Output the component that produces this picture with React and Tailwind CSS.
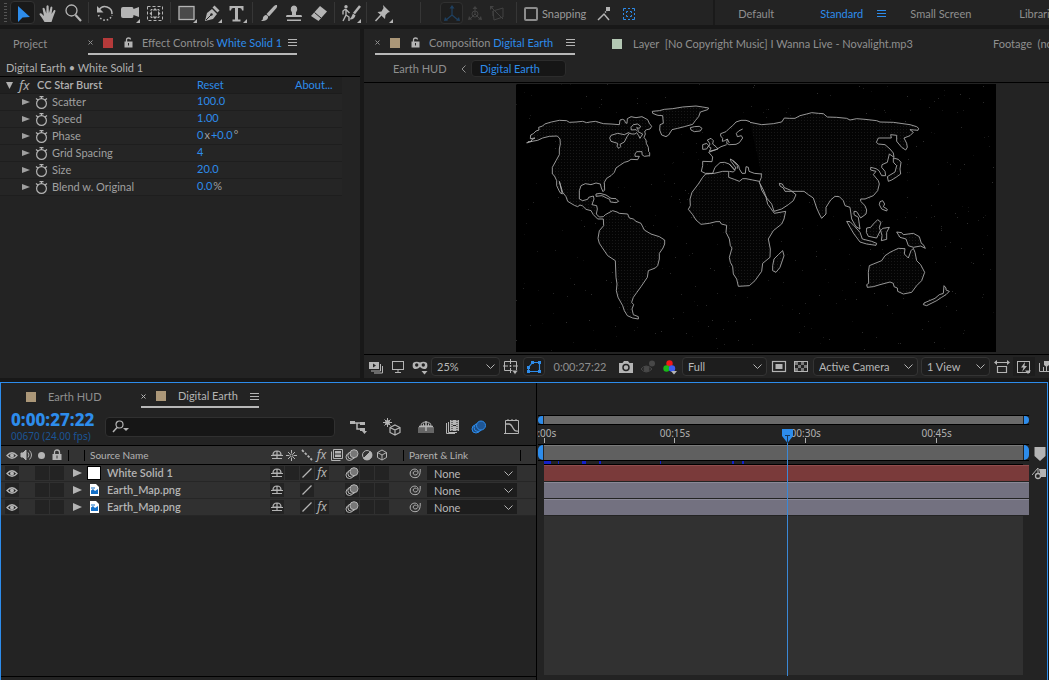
import { useState } from 'react'

const EFFECT_PROPS = [
  { label: 'Scatter', value: '100.0' },
  { label: 'Speed', value: '1.00' },
  { label: 'Phase', value: '0', mid: 'x', value2: '+0.0', unit: '°' },
  { label: 'Grid Spacing', value: '4' },
  { label: 'Size', value: '20.0' },
  { label: 'Blend w. Original', value: '0.0', unit: '%' }
]

const LAYERS = [
  { id: 1, name: 'White Solid 1', kind: 'solid', star: true, fx: true, bar: 'bg-[#7a3a3a] border-[#8f4d4d]' },
  { id: 2, name: 'Earth_Map.png', kind: 'image', star: false, fx: false, bar: 'bg-[#737180] border-[#8a8896]' },
  { id: 3, name: 'Earth_Map.png', kind: 'image', star: false, fx: true, bar: 'bg-[#737180] border-[#8a8896]' }
]

const DURATION = 54.9
const PLAYHEAD = 27.92
const RULER = [
  { at: 0, label: '0:00s' },
  { at: 15, label: '00:15s' },
  { at: 30, label: '00:30s' },
  { at: 45, label: '00:45s' }
]
// Cached preview frames, in seconds
const CACHED = [[0, 0.8], [1.6, 0.15], [4.4, 0.45], [6.3, 0.25], [13.3, 0.15], [21.5, 0.25], [22.7, 0.25]]

const pct = (seconds) => `${(seconds / DURATION) * 100}%`

// Small repeatable noise for the faint specks behind the map
const SPECKS = Array.from({ length: 420 }, (_, i) => {
  const a = Math.sin(i * 12.9898) * 43758.5453
  const b = Math.sin(i * 78.233) * 12543.123
  return { x: Math.floor((a - Math.floor(a)) * 480) * 3, y: Math.floor((b - Math.floor(b)) * 268) * 3, o: 0.06 + (i % 7) * 0.02 }
})

function Svg({ w = 20, h = 20, className = '', children }) {
  return (
    <svg width={w} height={h} viewBox={`0 0 ${w} ${h}`} className={`shrink-0 ${className}`} fill="none" stroke="currentColor" aria-hidden="true">
      {children}
    </svg>
  )
}

const Corner = () => <path d="M20 16v4h-4z" fill="currentColor" stroke="none" />

const TOOLS = {
  select: <path d="M5 3v16l4.500-4.500L17 14z" fill="currentColor" stroke="none" />,
  hand: (
    <path d="M6.500 19 L4 15 L1.500 11.500 Q1.500 9.500 3.500 10.500 L6 13 L4.500 5.500 Q5.500 4 6.500 5.300 L8.300 10.500 L8.500 3 Q9.600 1.500 10.600 3 L10.900 10.300 L12.600 4 Q13.800 3 14.400 4.500 L13.600 11 L16 7 Q17.500 6.500 17.500 8 L15 14.500 L13.500 19z" fill="currentColor" stroke="none" />
  ),
  zoom: <><circle cx="8.500" cy="7.500" r="5.500" strokeWidth="1.300" /><path d="M12.500 12l5.500 6" strokeWidth="2.200" /></>,
  rotate: <><path d="M4 7A7 7 0 0 1 17 11" strokeWidth="1.600" /><path d="M3.500 12A7 7 0 0 0 17 12" strokeWidth="1.600" strokeDasharray="1.500 2" /><path d="M2 3v6.500h6.500z" fill="currentColor" stroke="none" /></>,
  camera: <><path d="M1 6q0-2 2-2h9q1.500 0 1.500 2l5.500-2v10l-5.500-2q0 3-1.500 3H3q-2 0-2-2z" fill="currentColor" stroke="none" /></>,
  region: <><rect x="2.500" y="3.500" width="15" height="14" strokeDasharray="3 2" /><path d="M10 5l2.500 2.500h-5zM10 16l2.500-2.500h-5zM4.500 10.500L7 8v5zM15.500 10.500L13 8v5z" fill="currentColor" stroke="none" /><path d="M6 8V6.500h1.500M14 8V6.500h-1.500M6 13v1.500h1.500M14 13v1.500h-1.500" /></>,
  rect: <><rect x="2" y="3.500" width="15" height="13" fill="#4a4a4a" strokeWidth="1.300" /></>,
  pen: <><path d="M3 18l2-8 5-4 5 5-4 5z" fill="currentColor" stroke="none" /><path d="M10.500 4.500l2-2 5 5-2 2z" fill="currentColor" stroke="none" /><path d="M4 17l5-5" stroke="#232323" /><circle cx="9.500" cy="11.500" r="1.200" fill="#232323" stroke="none" /></>,
  type: <path d="M2.500 3h14v4.500h-1.500q0-2.500-2-2.500h-2v11.500h2.500v2h-8v-2H8V5H6Q4 5 4 7.500H2.500z" fill="currentColor" stroke="none" />,
  brush: <><path d="M18 2q-1.500-.5-3 1L7.500 11l2.500 2.500L17.500 5q1-1.500.5-3z" fill="currentColor" stroke="none" /><path d="M6.500 12q3 0 2.500 3-1.500 3.500-7 3 2.500-1.500 2-3.500.5-2 2.500-2.500z" fill="currentColor" stroke="none" /></>,
  stamp: <path d="M8 9.500Q6 7 7 4.500q1-2 3-2t3 2q1 2.500-1 5V12h5q1 0 1 2H2q0-2 1-2h5zM3 16.500h14v1.500H3z" fill="currentColor" stroke="none" />,
  eraser: <><path d="M2 13L11 3l7 5.500L9.500 18z" fill="currentColor" stroke="none" /><path d="M5.500 9.500l6.500 5.500" stroke="#232323" /></>,
  roto: <><circle cx="5" cy="3.800" r="1.700" fill="currentColor" stroke="none" /><path d="M4.500 6L2 8v3.500M5 6v6l-3 6M5 12l3 2v4M5 6.500L8.500 10" strokeWidth="1.400" /><path d="M19 3l-6 7.500" strokeWidth="2.500" /><path d="M12 10.500l2.500 2Q13 17 8.500 16.500q2-2 3.500-6z" fill="currentColor" stroke="none" /></>,
  pin: <><path d="M10 2l7 7-2 .5-2.500 2.500-.5 4-7.500-7 4-.5L10.500 5z" fill="currentColor" stroke="none" /><path d="M8 12l-5.500 6" strokeWidth="1.500" /></>,
  axisLocal: <><path d="M10 3v9L4 17M10 12l6 5" strokeWidth="1.200" /><path d="M10 2l2.500 3.500h-5zM2 18l1-4 3 3.500zM18 18l-1-4-3 3.500z" fill="currentColor" stroke="none" /></>,
  axisWorld: <><path d="M10 4v7L5 16M10 11l5 5" /><circle cx="10" cy="11" r="3" /><path d="M10 3l2.500 3h-5zM3 17l1-4 3 3.500zM17 17l-1-4-3 3.500z" fill="currentColor" stroke="none" /></>,
  axisView: <><path d="M5 8l10-3v9L6 17zM5 8v5M3 4l12 12" /><path d="M2 3h4l-4 4z" fill="currentColor" stroke="none" /></>
}

function ToolButton({ name, label, corner, active }) {
  return (
    <button
      aria-label={label}
      className={`flex h-[23px] w-[25px] shrink-0 items-center justify-center rounded-sm border ${active ? 'border-[#323232] bg-[#191919] text-[#2d8ceb]' : 'border-transparent'}`}
    >
      <Svg>
        {TOOLS[name]}
        {corner && <Corner />}
      </Svg>
    </button>
  )
}

const Sep = () => <div className="mx-[3px] h-[21px] w-px shrink-0 bg-[#363636]" />

function Toolbar() {
  const [snapping, setSnapping] = useState(false)

  return (
    <header className="flex h-[25px] items-center overflow-hidden bg-[#232323] text-[#b4b4b4]">
      <div className="ml-1 mr-[3px] flex h-5 w-[3px] shrink-0 flex-col justify-between">
        {[0, 1, 2, 3, 4, 5, 6].map(i => <span key={i} className="h-px bg-[#555]" />)}
      </div>
      <ToolButton name="select" label="Selection Tool" active />
      <ToolButton name="hand" label="Hand Tool" />
      <ToolButton name="zoom" label="Zoom Tool" />
      <Sep />
      <ToolButton name="rotate" label="Rotation Tool" />
      <ToolButton name="camera" label="Camera Tool" corner />
      <ToolButton name="region" label="Pan Behind Tool" />
      <Sep />
      <ToolButton name="rect" label="Rectangle Tool" corner />
      <ToolButton name="pen" label="Pen Tool" corner />
      <ToolButton name="type" label="Type Tool" corner />
      <Sep />
      <ToolButton name="brush" label="Brush Tool" />
      <ToolButton name="stamp" label="Clone Stamp Tool" />
      <ToolButton name="eraser" label="Eraser Tool" />
      <Sep />
      <ToolButton name="roto" label="Roto Brush Tool" corner />
      <Sep />
      <ToolButton name="pin" label="Puppet Pin Tool" corner />
      <div className="w-[22px] shrink-0" />
      <Sep />
      <div className="mr-1 ml-4 flex shrink-0 items-center text-[#424242]">
        <button aria-label="Local Axis Mode" className="flex h-[22px] w-[23px] items-center justify-center rounded-sm border border-[#303030] bg-[#1e1e1e] text-[#1f4060]"><Svg>{TOOLS.axisLocal}</Svg></button>
        <button aria-label="World Axis Mode" className="flex h-[22px] w-[23px] items-center justify-center"><Svg>{TOOLS.axisWorld}</Svg></button>
        <button aria-label="View Axis Mode" className="flex h-[22px] w-[23px] items-center justify-center"><Svg>{TOOLS.axisView}</Svg></button>
      </div>
      <Sep />
      <label className="ml-1 flex shrink-0 items-center gap-1 pt-[2px] text-[#9a9a9a]">
        <input
          type="checkbox"
          checked={snapping}
          onChange={(e) => setSnapping(e.target.checked)}
          className="h-[14px] w-[14px] appearance-none rounded-xs border-2 border-[#8c8c8c] checked:bg-[#2d8ceb]"
        />
        Snapping
      </label>
      <button aria-label="Snap to edges" className="ml-[10px] shrink-0 pt-[2px]">
        <Svg w={16} h={16}><path d="M2 14l6-6 5 6" strokeWidth="1.500" /><path d="M9 6.500L12 3.500" strokeDasharray="1.500 1" strokeWidth="1.500" /><path d="M10 1h4v4h-4z" fill="currentColor" stroke="none" /></Svg>
      </button>
      <button aria-label="Snap to features" className="ml-[9px] shrink-0 pt-[2px] text-[#2d8ceb]">
        <Svg w={16} h={16}><path d="M2.500 5V2.500H5M11 2.500h2.500V5M2.500 11v2.500H5M11 13.500h2.500V11M7 2.500h2M7 13.500h2M2.500 7v2M13.500 7v2M5.500 7V5.500H7M10.500 7V5.500H9M5.500 9v1.500H7M10.500 9v1.500H9" /></Svg>
      </button>
      <div className="ml-[76px] h-full w-[2px] shrink-0 bg-[#1a1a1a]" />
      <nav className="ml-[23px] flex items-center pt-[2px] whitespace-nowrap text-[#8f8f8f]">
        <button className="w-[82px] shrink-0 text-left">Default</button>
        <button className="w-[57px] shrink-0 text-left text-[#2d8ceb]">Standard</button>
        <button aria-label="Workspace menu" className="w-[33px] shrink-0 text-[#2d8ceb]"><MenuIcon /></button>
        <button className="w-[109px] shrink-0 text-left">Small Screen</button>
        <button className="shrink-0 text-left">Libraries</button>
      </nav>
    </header>
  )
}

const MenuIcon = () => <Svg w={9} h={9}><path d="M0 1.500h9M0 4.500h9M0 7.500h9" /></Svg>
const CloseIcon = () => <Svg w={5} h={5}><path d="M0.500 0.500l4 4M4.500 0.500l-4 4" /></Svg>
const LockOpen = () => (
  <Svg w={9} h={11}><path d="M2.500 5V3q0-2 2-2t2 1.500" strokeWidth="1.300" /><path d="M0.500 4.500h8v6h-8z" fill="currentColor" stroke="none" /><path d="M4.500 6v2.500" stroke="#232323" /></Svg>
)

function Tab({ children, className = '' }) {
  return <div className={`flex shrink-0 items-center self-stretch border-b-2 border-[#b8b8b8] ${className}`}>{children}</div>
}

function EffectControls() {
  return (
    <section className="w-[360px] shrink-0 overflow-hidden bg-[#232323]">
      <div className="flex h-[26px] items-center whitespace-nowrap pt-[3px] text-[#8f8f8f]">
        <button className="ml-[13px] w-[75px] shrink-0 text-left">Project</button>
        <Tab className="w-[209px]">
          <button aria-label="Close" className="w-[15px] shrink-0"><CloseIcon /></button>
          <span className="mr-[11px] h-[10px] w-[10px] shrink-0 bg-[#b53a3a]" />
          <span className="mr-[9px] text-[#b4b4b4]"><LockOpen /></span>
          <span className="w-[146px]">Effect Controls <span className="text-[#2d8ceb]">White Solid 1</span></span>
          <button aria-label="Panel menu" className="text-[#b4b4b4]"><MenuIcon /></button>
        </Tab>
      </div>
      <div className="flex h-[22px] items-center border-b border-black px-[6px] pt-1 text-[#b0b0b0]">Digital Earth • White Solid 1</div>
      <div className="mr-[18px] flex h-[17px] items-center border-b border-[#1c1c1c] bg-[#202020] pl-[6px] font-semibold text-[#b0b0b0]">
        <button aria-label="Collapse effect" className="w-[13px]"><Svg w={8} h={9}><path d="M0 1h7l-3.500 7z" fill="currentColor" stroke="none" /></Svg></button>
        <button aria-label="Toggle effect" className="w-[18px] text-left font-[Noto_Sans] text-[13px] leading-4 font-normal italic">fx</button>
        <span className="w-[160px]">CC Star Burst</span>
        <button className="w-[98px] text-left font-normal text-[#2d8ceb]">Reset</button>
        <button className="font-normal text-[#2d8ceb]">About...</button>
      </div>
      {EFFECT_PROPS.map(prop => (
        <div key={prop.label} className="mr-[18px] flex h-[17px] items-center border-b border-[#1e1e1e] bg-[#252525] pl-[22px] text-[#a0a0a0]">
          <button aria-label={`Expand ${prop.label}`} className="w-[13px]"><Svg w={8} h={8}><path d="M0 1v6l8-3z" fill="currentColor" stroke="none" /></Svg></button>
          <button aria-label={`Animate ${prop.label}`} className="w-[17px] text-[#b4b4b4]">
            <Svg w={13} h={13}><circle cx="6.500" cy="7.500" r="4.900" strokeWidth="1.200" /><path d="M4.500 0.600h4M6.500 1v2M1 2.500l2 1.500M12 2.500l-2 1.500" strokeWidth="1.200" /></Svg>
          </button>
          <span className="w-[145px]">{prop.label}</span>
          <span className="flex gap-px pb-[2px]">
            <button className="text-[#2d8ceb]">{prop.value}</button>
            {prop.mid && <span>{prop.mid}</span>}
            {prop.value2 && <button className="text-[#2d8ceb]">{prop.value2}</button>}
            {prop.unit && <span>{prop.unit}</span>}
          </span>
        </div>
      ))}
    </section>
  )
}

function WorldMap() {
  return (
    <svg viewBox="0 0 1440 804" className="h-[268px] w-[480px] shrink-0 bg-black" role="img" aria-label="World map">
      <defs>
        <pattern id="dots" width="9" height="9" patternUnits="userSpaceOnUse">
          <rect width="9" height="9" fill="#040404" />
          <rect width="3" height="3" fill="#181818" />
        </pattern>
      </defs>
      {SPECKS.map((s, i) => <rect key={i} x={s.x} y={s.y} width="3" height="3" fill="#fff" opacity={s.o} />)}
      {/* Land fill without borders, then coast lines on top */}
      <g fill="url(#dots)" stroke="#b4b4b4" strokeWidth="2.500" strokeLinejoin="round">
        {/* Americas */}
        <path d="M32 177L36 173 47 172 46 168 57 162 43 164 44 153 52 149 60 141 69 138 68 130 80 126 86 120 106 114 130 109 152 110 160 115 180 114 200 112 212 116 222 114 238 112 262 119 285 120 310 122 312 108 320 106 326 109 328 116 333 118 334 104 345 98 360 101 378 98 395 107 400 118 407 127 402 135 392 137 386 142 388 150 384 160 390 168 391 178 397 190 398 203 401 206 401 215 385 217 378 212 378 203 362 203 357 210 357 217 370 217 365 227 345 226 336 232 325 235 310 245 300 252 295 265 285 275 272 283 265 295 266 318 261 323 256 312 253 300 240 297 225 302 208 299 195 305 190 320 190 345 200 350 215 346 218 340 232 336 234 345 228 362 242 365 244 375 241 390 250 399 262 398 268 392 290 380 303 384 310 388 335 390 340 402 352 405 360 412 375 418 385 438 405 450 430 458 446 468 446 480 441 492 430 508 430 525 425 545 418 552 397 560 394 580 375 608 362 626 352 640 347 655 353 662 348 675 352 692 367 698 367 705 350 702 334 695 325 680 320 665 306 640 301 620 303 600 300 580 298 530 275 515 258 490 250 478 246 463 250 440 263 425 262 405 245 405 232 392 225 380 210 376 200 366 192 363 185 368 175 364 155 352 150 338 140 325 130 292 133 305 139 330 132 326 122 305 122 290 115 275 109 270 109 250 120 230 130 212 130 195 133 180 132 165 124 156 100 157 80 162 65 169 48 172z" />
        <path d="M340 145L325 152 305 148 285 154 281 162 285 172 305 178 303 188 309 193 314 188 312 181 325 174 333 158 340 148 348 150 357 150 362 146 368 155 372 163 380 150 366 143 360 137 346 138 345 130 352 122 365 120 374 127 370 133 362 131 368 140" />
        <path d="M240 330L252 328 270 333 285 343 300 344 308 352 300 356 283 354 281 346 272 342 258 335 240 337z" />
        <path d="M409 82L430 80 445 76 470 74 500 69 540 66 560 69 578 72 575 77 553 84 548 98 538 110 530 121 505 128 485 133 468 137 458 153 450 158 437 153 431 138 432 122 442 118 440 95 425 94 410 88z" />
        <path d="M523 131L535 128 550 127 558 133 553 141 535 143 525 138z" />
        {/* British Isles */}
        <path d="M574 168L585 163 592 170 590 180 600 188 606 195 580 202 585 192 578 188 582 180z M560 182L572 178 578 185 572 195 560 196z" />
        {/* Africa */}
        <path d="M569 270L560 280 547 300 528 325 522 345 523 365 517 376 530 392 540 408 555 421 580 418 600 413 612 413 616 420 632 424 630 445 640 465 643 485 648 492 640 520 643 535 650 548 652 570 662 585 667 607 700 605 717 590 737 562 740 538 762 520 763 495 757 465 772 440 797 420 804 405 809 382 775 388 755 360 750 340 737 318 730 292 710 288 690 284 680 284 670 292 655 286 638 280 638 262 620 262 595 268z" />
        {/* Mediterranean and northern Europe */}
        <path d="M702 113L690 109 675 109 660 114 650 125 640 133 630 143 614 149 614 156 620 163 619 172 626 170 634 165 632 178 640 182 660 181 670 176 680 162 676 155 664 158 661 148 668 141 680 135M634 165L640 177M632 182L615 188 600 197 578 205 586 214 590 219 588 233 560 232 560 245 556 262 568 268 590 268 597 250 612 236 625 235 640 240 650 252 655 258 660 252 645 232 643 225 655 232 668 245 670 255 678 268 688 268 690 248 697 250 699 262 715 268 737 270M640 240L658 258 652 264 640 262M650 230L664 245 664 254" fill="none" />
        <g transform="translate(702 0)">
          {/* Asia */}
          <path d="M0 115L35 122 70 119 95 114 103 102 118 103 135 103 150 95 170 90 185 86 205 88 220 89 232 99 260 100 290 103 300 108 320 104 345 106 380 110 390 114 430 115 480 122 500 128 506 133 504 139 480 137 490 145 480 155 462 162 470 178 472 190 467 198 455 190 440 172 440 154 422 152 424 162 385 162 379 175 385 180 405 182 420 195 430 207 432 220 418 210 412 235 396 242 395 250 405 262 407 275 395 275 387 260 378 254 362 250 362 258 378 262 370 272 385 290 388 300 383 320 370 335 345 345 332 345 332 352 345 365 350 378 348 390 332 402 320 383 312 382 312 392 325 400 330 435 318 428 305 405 300 370 285 365 280 350 268 338 255 337 242 348 228 370 228 390 215 403 208 390 200 372 190 342 175 332 162 322 125 322 105 322 100 312 90 306 88 298 97 300 103 311 122 319 138 332 130 350 115 362 95 375 72 382 65 360 50 342 40 318 28 295 34 280 34 268" />
          <path d="M430 222L445 226 453 235 450 255 452 270 438 280 425 288 415 292 412 278 435 264 440 245 430 235z" />
          <path d="M390 353L398 350 404 360 400 368 412 376 410 381 395 375 388 362z" />
          <path d="M290 412L300 413 312 425 330 445 337 465 365 472 380 478 378 484 350 480 330 474 312 450 300 430z" />
          <path d="M350 432L362 430 370 420 383 407 393 415 388 430 391 440 380 462 355 457 349 445z M392 440L398 433 418 430 410 445 410 466 394 470 396 455z" />
          <path d="M440 444L455 446 460 452 490 448 508 458 514 478 520 482 526 493 512 486 490 490 475 485 468 465 450 460z" />
          <path d="M430 500L445 493 465 494 463 510 475 522 483 500 490 493 495 505 500 530 512 542 524 565 515 590 500 605 485 625 460 630 443 622 442 612 432 608 430 598 420 594 390 602 370 608 352 610 350 602 356 598 355 565 358 545 370 540 395 530 405 515 420 505z" />
          <path d="M582 605L588 612 588 618 598 622 588 632 575 640 560 650 530 665 520 662 522 657 555 643 568 632 580 628z" />
          <path d="M98 500L102 515 90 550 78 565 68 560 68 545 72 525 85 512z" />
        </g>
      </g>
    </svg>
  )
}

// Drop-down with the flat dark look of the viewer bar
function Dropdown({ label, options, className = '' }) {
  return (
    <span className={`relative flex shrink-0 items-center ${className}`}>
      <select aria-label={label} className="h-full w-full appearance-none rounded-sm bg-transparent pl-[5px] text-[#b8b8b8] outline-none">
        {options.map(option => <option key={option}>{option}</option>)}
      </select>
      <Svg w={9} h={5} className="pointer-events-none absolute right-1"><path d="M0.500 0.500l4 4 4-4" /></Svg>
    </span>
  )
}

function BarButton({ label, className = '', children }) {
  return (
    <button aria-label={label} className={`flex h-[19px] w-[22px] shrink-0 items-center justify-center ${className}`}>
      <Svg w={16} h={16}>{children}</Svg>
    </button>
  )
}

const box = 'h-[19px] rounded-sm border border-[#343434] bg-[#1d1d1d]'

function ViewerBar() {
  return (
    <div className="flex h-[24px] items-center overflow-hidden border-t border-black text-[#b4b4b4]">
      <BarButton label="Always preview this view" className="ml-px">
        <rect x="1" y="3" width="10" height="7" fill="currentColor" stroke="none" /><path d="M5 4.500v4l3-2z" fill="#232323" stroke="none" /><path d="M3 12h9.500V5M6 14h8.500V7" />
      </BarButton>
      <BarButton label="Primary viewer"><rect x="2.500" y="2.500" width="11" height="8" /><path d="M8 11v2M5 13.500h6" /></BarButton>
      <BarButton label="Toggle mask">
        <path d="M1 4q3-2 7-.5Q12 2 15 4q1.500 6-3 6-2 0-4-2-2 2-4 2-4.500 0-3-6z" fill="currentColor" stroke="none" /><circle cx="4.700" cy="6" r="1.700" fill="#232323" stroke="none" /><circle cx="11.300" cy="6" r="1.700" fill="#232323" stroke="none" /><path d="M9.500 12h6l-3 3.500z" fill="currentColor" stroke="none" />
      </BarButton>
      <Dropdown label="Magnification" options={['25%', '50%', '100%']} className={`w-[69px] ${box}`} />
      <BarButton label="Grid and guides"><path d="M1.500 2.500h12v9h-12zM0 7h5M10 7h5M7.500 0v5M7.500 9v5" /><path d="M7.500 6v2M6.500 7h2" /><path d="M9 11.500h6l-3 4z" fill="currentColor" stroke="#232323" strokeWidth="0.500" /></BarButton>
      <BarButton label="Toggle mask path" className={`text-[#2d8ceb] ml-px ${box}`}><path d="M2.500 12.500v-4l4-5h7v9z" strokeWidth="1.200" /><path d="M1 11h3v3H1zM12 11h3v3h-3zM12 2h3v3h-3zM5 2h3v3H5zM1 7h3v3H1z" fill="currentColor" stroke="none" /></BarButton>
      <button className="w-[70px] shrink-0 text-center text-[#8f8f8f]">0:00:27:22</button>
      <BarButton label="Take snapshot"><path d="M1 4h3.500L6 2h4l1.500 2H15v10H1z" fill="currentColor" stroke="none" /><circle cx="8" cy="8.500" r="3" stroke="#232323" strokeWidth="1.500" /></BarButton>
      <BarButton label="Show snapshot" className="text-[#484848]"><path d="M1 10q5-6 11 0-6 6-11 0z" /><circle cx="6.500" cy="10" r="2.500" fill="currentColor" /><circle cx="12" cy="4.500" r="3" fill="currentColor" stroke="none" /></BarButton>
      <BarButton label="Show channel"><circle cx="7.500" cy="4.500" r="3.200" fill="#f01818" stroke="none" /><circle cx="4.500" cy="9.500" r="3.200" fill="#18b818" stroke="none" /><circle cx="10" cy="9.500" r="3.200" fill="#3c5cf0" stroke="none" /><path d="M9 12h6l-3 3.500z" fill="currentColor" stroke="none" /></BarButton>
      <Dropdown label="Resolution" options={['Full', 'Half', 'Third']} className={`w-[85px] ml-px ${box}`} />
      <BarButton label="Region of interest" className="ml-px"><rect x="1.500" y="2.500" width="13" height="10" strokeWidth="1.200" /><rect x="4.500" y="5" width="7" height="5" fill="currentColor" stroke="none" /></BarButton>
      <BarButton label="Transparency grid">
        <rect x="1.500" y="2.500" width="13" height="10" />
        <path d="M2 3h3v3H2zM8 3h3v3H8zM5 6h3v3H5zM11 6h3v3h-3zM2 9h3v3H2zM8 9h3v3H8z" fill="currentColor" opacity="0.600" stroke="none" />
      </BarButton>
      <Dropdown label="3D view" options={['Active Camera', 'Front', 'Top']} className={`w-[105px] ml-px ${box}`} />
      <Dropdown label="View layout" options={['1 View', '2 Views', '4 Views']} className={`w-[69px] mx-[3px] ${box}`} />
      <BarButton label="Pixel aspect ratio" className="-ml-[2px]"><path d="M1 3.500h14M3.500 7.500h9v6h-9z" strokeWidth="1.200" /><path d="M0 3.500l3-2.500v5zM16 3.500l-3-2.500v5z" fill="currentColor" stroke="none" /></BarButton>
      <BarButton label="Fast previews" className="bg-[#1d1d1d]"><rect x="1.500" y="2.500" width="12" height="11" /><path d="M9 3L5 8.500h2.500L6 13l5-6H8.500z" fill="currentColor" stroke="none" /><path d="M9 11.500h6l-3 3.500z" fill="currentColor" stroke="none" /></BarButton>
      <BarButton label="Timeline"><path d="M1.500 4v8.500h14M5.500 8v4M8.500 5v7" /><path d="M6 2h5v4l-2.500 2L6 6z" fill="currentColor" stroke="none" /></BarButton>
    </div>
  )
}

function Composition() {
  return (
    <section className="min-w-0 flex-1 overflow-hidden bg-[#232323]">
      <div className="flex h-[26px] items-center whitespace-nowrap pt-[3px] pl-[11px] text-[#8f8f8f]">
        <Tab className="w-[200px]">
          <button aria-label="Close" className="w-[15px] shrink-0"><CloseIcon /></button>
          <span className="mr-[11px] h-[10px] w-[10px] shrink-0 bg-[#ab9778]" />
          <span className="mr-[9px] text-[#b4b4b4]"><LockOpen /></span>
          <span className="w-[137px]">Composition <span className="text-[#2d8ceb]">Digital Earth</span></span>
          <button aria-label="Panel menu" className="text-[#b4b4b4]"><MenuIcon /></button>
        </Tab>
        <button className="ml-[37px] flex w-[381px] shrink-0 items-center gap-[11px]">
          <span className="h-[10px] w-[10px] bg-[#b4c8b4]" />
          <span className="whitespace-pre">Layer  [No Copyright Music] I Wanna Live - Novalight.mp3</span>
        </button>
        <button className="whitespace-pre">Footage  (none)</button>
      </div>
      <nav className="flex h-[28px] items-center border-b border-black pl-[29px] text-[#8f8f8f]">
        <button className="w-[68px] text-left">Earth HUD</button>
        <Svg w={5} h={8} className="mr-[5px]"><path d="M4.500 0.500L1 4l3.500 3.500" /></Svg>
        <button className="h-[17px] w-[95px] rounded-sm border border-[#2c2c2c] bg-[#161616] pl-2 text-left leading-[15px] text-[#2d8ceb]">Digital Earth</button>
      </nav>
      <div className="pt-px pb-[2px] pl-[152px]">
        <WorldMap />
      </div>
      <ViewerBar />
    </section>
  )
}

const Eye = () => <Svg w={12} h={9}><path d="M1 4.500Q6-1 11 4.500 6 10 1 4.500z" strokeWidth="1.300" /><circle cx="6" cy="4.500" r="2" fill="currentColor" stroke="none" /></Svg>
const Shy = () => <Svg w={12} h={12}><path d="M2 6q0-4 4-4t4 4zM6 2v8M1 9.500h10M2 6h8M0 6.500h12" strokeWidth="1.200" /></Svg>
const Slash = () => <Svg w={12} h={12}><path d="M1.500 10.500l9-9" strokeWidth="1.300" /></Svg>
const Blur = () => <Svg w={14} h={12}><circle cx="4.500" cy="8" r="3.500" /><circle cx="6.500" cy="6.500" r="3.700" fill="#333" /><circle cx="9" cy="4.700" r="4" fill="#777" /></Svg>
const Film = () => <Svg w={12} h={12}><path d="M2.500 0.500h9v9h-9zM0.500 2.500v9h9" /><path d="M4 2h6v6H4z" fill="currentColor" stroke="none" /><path d="M4 5h6" stroke="#333" /></Svg>
const Cube = () => <Svg w={12} h={12}><path d="M6 1l4.500 2.500v5L6 11 1.500 8.500v-5zM1.500 3.500L6 6l4.500-2.500M6 6v5" /></Svg>
const Spiral = () => <Svg w={12} h={12}><path d="M7.500 4.500C6 3.500 4 4.500 4.200 6.200S6.500 8.500 8 7.500 9.500 3.500 7.500 2.500 1.500 2.500 1.200 6 4 11 7 10.600 11.500 7.500 11.200 2" /></Svg>
const Fx = () => <span className="font-[Noto_Sans] text-[12px] leading-3 italic">fx</span>

function SwitchBox({ empty, label, children }) {
  return (
    <button aria-label={label} className={`mr-px flex h-[14px] w-[14px] shrink-0 items-center justify-center ${empty ? '' : 'bg-[#232323]'}`}>
      {children}
    </button>
  )
}

function HeadIcon({ children }) {
  return <span className="flex w-[15px] shrink-0 items-center justify-center">{children}</span>
}

function LayerTable() {
  return (
    <table className="w-full table-fixed border-collapse text-left text-[#b4b4b4]">
      <thead>
        <tr className="h-[19px] border-y border-black bg-[#333] text-[10px] leading-[17px]">
          <th className="w-[67px] p-0 font-normal" aria-label="Visibility, audio, solo, lock">
            <div className="flex pl-[3px]">
              <HeadIcon><Eye /></HeadIcon>
              <HeadIcon><Svg w={13} h={12}><path d="M1 4h2l3-3v10L3 8H1z" fill="currentColor" /><path d="M8 3.500q2 2.500 0 5M9.500 1.500q4 4.500 0 9" /></Svg></HeadIcon>
              <HeadIcon><span className="h-[7px] w-[7px] rounded-full bg-[#b4b4b4]" /></HeadIcon>
              <HeadIcon><Svg w={10} h={12}><path d="M2.500 6V3.500q0-2.500 2.500-2.500t2.500 2.500V6" strokeWidth="1.300" /><path d="M0.500 5h9v6h-9z" fill="currentColor" stroke="none" /><path d="M5 6.500v3" stroke="#333" /></Svg></HeadIcon>
            </div>
          </th>
          <th className="w-[201px] p-0 font-normal">
            <div className="flex">
              <span className="my-[3px] mr-[15px] h-[11px] w-px bg-black" />
              <span className="my-[3px] mr-[5px] h-[11px] w-px bg-black" />
              <span>Source Name</span>
            </div>
          </th>
          <th className="w-[134px] p-0 font-normal" aria-label="Switches">
            <div className="flex">
              <HeadIcon><Shy /></HeadIcon>
              <HeadIcon><Svg w={11} h={11}><circle cx="5.500" cy="5.500" r="1.500" /><path d="M5.500 0v3M5.500 8v3M0 5.500h3M8 5.500h3M2 2l2 2M9 2L7 4M2 9l2-2M9 9L7 7" /></Svg></HeadIcon>
              <HeadIcon><Svg w={12} h={12}><path d="M1 1l10 10" strokeWidth="1.800" strokeDasharray="2.500 1.500" /></Svg></HeadIcon>
              <HeadIcon><Fx /></HeadIcon>
              <HeadIcon><Film /></HeadIcon>
              <HeadIcon><Blur /></HeadIcon>
              <HeadIcon><Svg w={12} h={12}><circle cx="6" cy="6" r="4.500" /><path d="M9.500 2.500A4.700 4.700 0 0 1 2.500 9.500z" fill="currentColor" /></Svg></HeadIcon>
              <HeadIcon><Cube /></HeadIcon>
            </div>
          </th>
          <th className="p-0 font-normal">
            <div className="flex">
              <span className="my-[3px] mr-[5px] h-[11px] w-px bg-black" />
              <span>Parent &amp; Link</span>
              <span className="my-[3px] mr-[15px] ml-auto h-[11px] w-px bg-black" />
            </div>
          </th>
        </tr>
      </thead>
      <tbody>
        {LAYERS.map(layer => (
          <tr key={layer.id} className="h-[17px] border-b border-[#262626] bg-[#303030]">
            <td className="p-0">
              <div className="flex pl-1">
                <SwitchBox label="Visible"><Eye /></SwitchBox>
                <SwitchBox label="Audio" empty />
                <SwitchBox label="Solo" />
                <SwitchBox label="Lock" />
              </div>
            </td>
            <td className="p-0">
              <div className="flex items-center leading-4 font-semibold">
                <button aria-label={`Expand ${layer.name}`} className="ml-[5px] w-[14px]"><Svg w={9} h={8}><path d="M0 0v8l9-4z" fill="currentColor" stroke="none" /></Svg></button>
                <span className="flex w-5 shrink-0">
                  {layer.kind === 'solid'
                    ? <span className="h-[14px] w-[14px] border border-black bg-white" />
                    : <Svg w={14} h={14}><path d="M3 1h6l3 3v9H3z" fill="#fff" stroke="none" /><path d="M4 11V7.500L6 6l2 2 3-2v5z" fill="#1470c8" stroke="none" /><path d="M4 5h4" stroke="#1470c8" /></Svg>}
                </span>
                <span>{layer.name}</span>
              </div>
            </td>
            <td className="p-0">
              <div className="flex pl-px">
                <SwitchBox label="Shy"><Shy /></SwitchBox>
                <SwitchBox label="Collapse" empty={!layer.star} />
                <SwitchBox label="Quality"><Slash /></SwitchBox>
                <SwitchBox label="Effects" empty={!layer.fx}>{layer.fx && <Fx />}</SwitchBox>
                <SwitchBox label="Frame blending" empty />
                <SwitchBox label="Motion blur"><Blur /></SwitchBox>
                <SwitchBox label="Adjustment layer" />
                <SwitchBox label="3D layer" />
              </div>
            </td>
            <td className="p-0">
              <div className="flex items-center">
                <button aria-label="Parent pick whip" className="ml-[6px] w-[18px]"><Spiral /></button>
                <Dropdown label={`Parent of layer ${layer.id}`} options={['None']} className="h-[14px] w-[90px] bg-[#1d1d1d] pl-[2px]" />
              </div>
            </td>
          </tr>
        ))}
      </tbody>
    </table>
  )
}

function TimelineTools() {
  return (
    <div className="flex h-[37px] items-center text-[#b4b4b4]">
      <div className="w-[104px] shrink-0 pl-[10px] font-[Noto_Sans]">
        <button className="block text-[17px] leading-[18px] font-extrabold text-[#2d8ceb]">0:00:27:22</button>
        <div className="text-[10px] leading-[14px] whitespace-nowrap text-[#1b5596]">00670 (24.00 fps)</div>
      </div>
      <label className="flex h-5 w-[230px] shrink-0 items-center rounded-sm border border-[#303030] bg-[#161616] pl-[6px]">
        <Svg w={18} h={13}><circle cx="7.500" cy="4.500" r="3.500" strokeWidth="1.200" /><path d="M5 7.500L1 12" strokeWidth="1.500" /><path d="M11 8h6l-3 3z" fill="currentColor" stroke="none" /></Svg>
        <input type="text" aria-label="Search layers" className="w-full bg-transparent outline-none" />
      </label>
      <button aria-label="Composition mini-flowchart" className="ml-[14px] w-[34px]">
        <Svg w={18} h={14}><path d="M1 3h5M6 3h5M8 3v6h4" strokeWidth="1.500" /><path d="M1 1h5v3H1zM11 2h5v3h-5zM11 8h5v3h-5z" fill="currentColor" stroke="none" /><path d="M13 11h5l-2.500 3z" fill="currentColor" stroke="none" /></Svg>
      </button>
      <button aria-label="Draft 3D" className="w-[35px]">
        <Svg w={18} h={18}><path d="M12 7l5 2.500v5L12 17l-5-2.500v-5zM7 9.500l5 2.500 5-2.500M12 12v5" strokeWidth="1.200" /><circle cx="4.500" cy="4.500" r="2" fill="currentColor" /><path d="M4.500 0v9M0 4.500h9M1.500 1.500l6 6M7.500 1.500l-6 6" /></Svg>
      </button>
      <button aria-label="Hide shy layers" className="w-[27px]">
        <Svg w={16} h={14}><path d="M0 7h16v6H0z" fill="#666" stroke="none" /><path d="M3 6q0-4 5-4t5 4z" /><path d="M8 1v10M1 6.500h14" strokeWidth="1.500" /><path d="M5.500 3.500v3M10.500 3.500v3" /></Svg>
      </button>
      <button aria-label="Frame blending" className="w-[26px]">
        <Svg w={15} h={15}><path d="M5 1h9v11H5z" fill="currentColor" stroke="none" /><path d="M7 1v11M12 1v11" stroke="#232323" strokeDasharray="1 1" /><path d="M8 6.500h3" stroke="#232323" /><path d="M3.500 3v10.500H12M1.500 4v10.500H10" /></Svg>
      </button>
      <button aria-label="Motion blur" className="w-[33px] text-[#2d8ceb]">
        <Svg w={16} h={14}><circle cx="5" cy="9" r="4" fill="#1c4a80" /><circle cx="7" cy="7.500" r="4" fill="#1c4a80" /><circle cx="10" cy="5.500" r="4.500" fill="#1f5695" /></Svg>
      </button>
      <button aria-label="Graph editor">
        <Svg w={16} h={16}><path d="M1.500 1.500h13v13h-13zM0 14.500h3M4 0v2M8 0v2M12 0v2" /><path d="M2 5h3q2 0 4 4t5 3" strokeWidth="1.300" /></Svg>
      </button>
    </div>
  )
}

function Tracks() {
  return (
    <div className="relative flex min-w-0 flex-1 flex-col pr-[24px] pl-[7px]">
      <div className="pt-[32px]">
        <div className="-mx-[6px] flex h-[10px] border-y border-black">
          <span className="mr-px w-[5px] shrink-0 rounded-l-full bg-[#2d8ceb]" />
          <div className="flex-1 bg-[#6a6a6a]" />
          <span className="ml-px w-[5px] shrink-0 rounded-r-full bg-[#2d8ceb]" />
        </div>
        <div className="-ml-[7px] h-[19px] overflow-x-clip pl-[7px] text-[10px] leading-[17px] text-[#b0b0b0]">
          <div className="relative h-full">
            {RULER.map(mark => (
              <div key={mark.at} style={{ left: pct(mark.at) }} className="absolute flex w-0 flex-col items-center">
                <span className="h-[13px] font-[Noto_Sans]">{mark.label}</span>
                <span className="h-[5px] w-px shrink-0 bg-[#b0b0b0]" />
              </div>
            ))}
          </div>
        </div>
        <div className="-mx-[6px] flex h-[17px] border-y border-black">
          <span className="mr-px w-[5px] shrink-0 rounded-l-md bg-[#2d8ceb]" />
          <div className="flex-1 border-t border-[#7a7a7a] bg-[#606060]" />
          <span className="ml-px w-[5px] shrink-0 rounded-r-md bg-[#2d8ceb]" />
        </div>
        <div className="relative h-1 border-b border-black">
          {CACHED.map(([at, length]) => (
            <span key={at} style={{ left: pct(at), width: pct(length) }} className="absolute h-[3px] bg-[#1420c8]" />
          ))}
        </div>
      </div>
      {LAYERS.map(layer => <div key={layer.id} className={`-mr-[6px] mb-px h-4 shrink-0 border-t ${layer.bar}`} />)}
      <div className="mb-[5px] flex-1 bg-[#313131]" />
      {/* Playhead sits over the ruler and every track */}
      <div className="pointer-events-none absolute top-[46px] right-[24px] bottom-[4px] left-[7px]">
        <div style={{ left: pct(PLAYHEAD) }} className="absolute flex h-full w-0 flex-col items-center text-[#2d8ceb]">
          <Svg w={11} h={14}><path d="M0 0h11v7l-5.500 7L0 7z" fill="currentColor" stroke="none" /><path d="M3 6.500h5M5.500 6.500v7" stroke="#16385c" /></Svg>
          <span className="w-px flex-1 bg-[#3b88d6]" />
        </div>
      </div>
      <div className="absolute top-[64px] right-[1px] flex flex-col items-end gap-[6px] text-[#b4b4b4]">
        <button aria-label="Comp marker bin"><Svg w={12} h={14}><path d="M0.500 0h11v9L6 14 0.500 9z" fill="currentColor" stroke="none" /></Svg></button>
        <button aria-label="Comp button"><Svg w={14} h={13}><path d="M0 8l6-7v6" /><path d="M7 2h7v8H9z" fill="currentColor" stroke="none" /><circle cx="6" cy="9" r="2.500" fill="#232323" strokeWidth="1.300" /></Svg></button>
      </div>
    </div>
  )
}

function Timeline() {
  return (
    <section className="mr-px flex min-h-0 flex-1 border border-b-0 border-[#2d8ceb] bg-[#232323]">
      <div className="flex w-[536px] shrink-0 flex-col border-r border-black">
        <div className="flex h-[25px] items-center pt-[3px] text-[#8f8f8f]">
          <button className="ml-[25px] flex w-[115px] items-center gap-3"><span className="h-[10px] w-[10px] bg-[#ab9778]" />Earth HUD</button>
          <Tab className="w-[118px] text-[#b4b4b4]">
            <button aria-label="Close" className="w-[15px] shrink-0"><CloseIcon /></button>
            <span className="mr-3 h-[10px] w-[10px] shrink-0 bg-[#ab9778]" />
            <span className="w-[72px]">Digital Earth</span>
            <button aria-label="Panel menu"><MenuIcon /></button>
          </Tab>
        </div>
        <TimelineTools />
        <LayerTable />
        <div className="mt-auto h-1 border-t border-black" />
      </div>
      <Tracks />
    </section>
  )
}

export default function App() {
  return (
    <div className="flex h-screen flex-col overflow-hidden bg-[#181818] font-['Lato','Liberation_Sans',sans-serif] text-[11px] leading-4">
      <Toolbar />
      <main className="flex min-h-0 flex-1 flex-col gap-1 pt-1">
        <div className="flex gap-1">
          <EffectControls />
          <Composition />
        </div>
        <Timeline />
      </main>
    </div>
  )
}
